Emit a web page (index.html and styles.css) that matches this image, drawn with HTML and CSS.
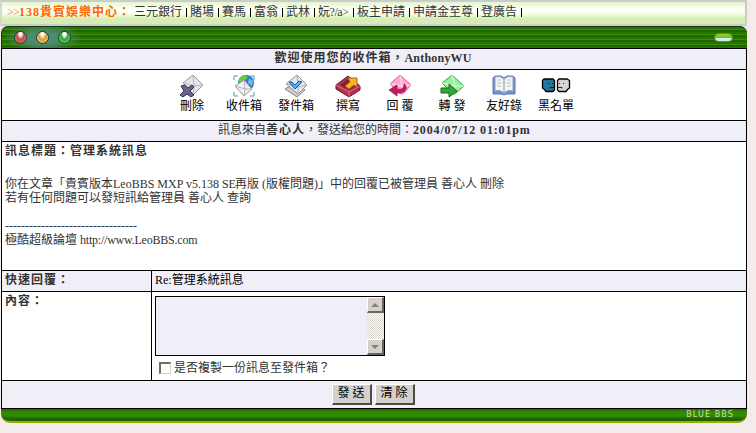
FILE: index.html
```
<!DOCTYPE html>
<html lang="zh-Hant">
<head>
<meta charset="utf-8">
<title>收件箱</title>
<link rel="stylesheet" href="styles.css">
</head>
<body>
<nav class="topnav"><span class="arrows">&gt;&gt;</span><b class="brand"><span class="num">138</span>貴賓娛樂中心：</b><a>三元銀行</a><a>賭場</a><a>賽馬</a><a>富翁</a><a>武林</a><a class="odd">妧?/a&gt;</a><a>板主申請</a><a>申請金至尊</a><a>登廣告</a></nav>
<main class="window">
  <header class="titlebar">
    <div class="lights"><i class="light red"></i><i class="light yellow"></i><i class="light lime"></i></div>
    <i class="pill"></i>
  </header>
  <section class="panel">
    <h1 class="row welcome">歡迎使用您的收件箱，<span class="user">AnthonyWU</span></h1>
    <div class="tools">
      <a class="tool"><svg viewBox="0 0 26 24"><path d="M4 9 14 1 24 11 14 21Z" fill="#e5e5e7" stroke="#96969c"/><path d="M4 9 15 12 14 1M15 12 14 21M15 12 24 11" fill="none" stroke="#b7b7bd"/><path d="M2 12 6 11 9 14 13 11 15 13 11 17 15 21 12 23 8 20 4 23 1 21 5 17Z" fill="#66668f" stroke="#343452"/></svg><span>刪除</span></a>
      <a class="tool"><svg viewBox="0 0 26 24"><circle cx="15" cy="9" r="8" fill="#2878d0"/><path d="M7 7Q9 1 15 1L17 4 14 6 11 10Z" fill="#65cb43"/><path d="M18 4 22 7 21 12 17 9Z" fill="#79b7eb"/><path d="M4 12 13 6 21 15 13 22Z" fill="#f0f0f0" stroke="#9696a0"/><path d="M4 12 14 15 13 6M14 15 13 22M14 15 21 15" fill="none" stroke="#b4b4bc"/><path d="M3 6V2H7M19 2H23V6M3 18V22H7M19 22H23V18" fill="none" stroke="#4c91bd"/></svg><span>收件箱</span></a>
      <a class="tool"><svg viewBox="0 0 26 24"><path d="M2 15 12 9 22 16 14 23Z" fill="#ccccce" stroke="#84848b"/><path d="M3 10 14 1 24 11 15 20Z" fill="#e9e9ec" stroke="#96969c"/><path d="M3 10 15 13 14 1M15 13V20M15 13 24 11" fill="none" stroke="#aaaab0"/><path d="M6 8 9 8 12 11 16 7 19 8 12 15Z" fill="#4ab5ff" stroke="#145aa8"/></svg><span>發件箱</span></a>
      <a class="tool"><svg viewBox="0 0 26 24"><path d="M1 11 13 2 25 12V16L14 23 1 15Z" fill="#b4304f" stroke="#681932"/><path d="M5 11 13 5 21 12 14 16Z" fill="#7d2138"/><path d="M1 11 14 18 25 12M14 18V23" fill="none" stroke="#e06b87"/><path d="M13 4H22V13L19 11 14 15 10 12 15 8Z" fill="#ffb324" stroke="#a96516"/></svg><span>撰寫</span></a>
      <a class="tool"><svg viewBox="0 0 26 24"><path d="M3 10 13 1 24 11 15 21Z" fill="#ffabd2" stroke="#db559b"/><path d="M3 10 15 12 13 1M15 12V21M15 12 24 11" fill="none" stroke="#ffe3ef"/><path d="M17 10C21 12 20 20 10 19V22L2 16 10 11V15C15 16 17 14 17 10Z" fill="#c51c59" stroke="#86123d" stroke-width=".7"/></svg><span>回 覆</span></a>
      <a class="tool"><svg viewBox="0 0 26 24"><path d="M3 9 13 1 25 12 15 21Z" fill="#98ef9c" stroke="#3cad4b"/><path d="M3 9 16 12 13 1M16 12 15 21M16 12 25 12" fill="none" stroke="#e0ffe1"/><path d="M2 14H10V10L18 17 10 23V19H2Z" fill="#32a832" stroke="#176a22"/></svg><span>轉 發</span></a>
      <a class="tool"><svg viewBox="0 0 26 24"><path d="M2 4 4 2H10L13 4 16 2H22L24 4V20H15L13 21 11 20H2Z" fill="#6f8fd4" stroke="#5f79b8"/><path d="M4 3Q9 1 13 5Q17 1 22 3V17Q17 15 13 19Q9 15 4 17Z" fill="#f3f4f6" stroke="#91a0b5"/><path d="M13 5V18" fill="none" stroke="#8390a8"/><path d="M6 6H10M6 9H11M6 12H10M16 6H20M15 9H20M16 12H20" fill="none" stroke="#bcc4d0"/></svg><span>友好錄</span></a>
      <a class="tool"><svg class="wide" viewBox="0 0 30 24"><path d="M3 5H12L13.500 6.500V16L12 17.500H5L3.500 15.500 1.500 14V6.500Z" fill="#23759b" stroke="#000" stroke-width="1.300"/><path d="M18 5H26L28.500 6.500V14L26.500 15.500 25 17.500H18L16.500 16V6.500Z" fill="#d6d6d6" stroke="#000" stroke-width="1.300"/><path d="M7 9.500H8M11 9.500H12M9 14.500V13.500H13M18 9.500H19M22 9.500H23M17 13.500H21V14.500" fill="none" stroke="#000" stroke-width=".8"/></svg><span>黑名單</span></a>
    </div>
    <div class="row from">訊息來自<b>善心人</b>，發送給您的時間：<b class="date">2004/07/12 01:01pm</b></div>
    <article class="message">
      <b>訊息標題：管理系統訊息</b>
      <p>你在文章「貴賓版本<span class="product">LeoBBS MXP v5.138 SE </span>再版 (版權問題)」中的回覆已被管理員 善心人 刪除<br>若有任何問題可以發短訊給管理員 善心人 查詢</p>
      <p><span class="rule">---------------------------------</span><br>極酷超級論壇 <span class="url">http://www.LeoBBS.com</span></p>
    </article>
    <form class="reply">
      <b class="label shade">快速回覆：</b>
      <div class="field shade subject">Re:管理系統訊息</div>
      <b class="label">內容：</b>
      <div class="field">
        <div class="textarea"><div class="scrollbar"><span class="scroll up"></span><span class="scroll down"></span></div></div>
        <label class="copy"><i class="check"></i>是否複製一份訊息至發件箱？</label>
      </div>
      <div class="actions shade"><span class="btn">發 送</span><span class="btn">清 除</span></div>
    </form>
  </section>
  <footer class="bottom">BLUE BBS</footer>
</main>
</body>
</html>
```
FILE: styles.css
```
* { box-sizing: border-box; }
body {
  margin: 0;
  height: 433px;
  overflow: hidden;
  background: #f4ebeb;
  color: #333;
  font: 12px/14px "Liberation Serif", "Noto Sans CJK TC", serif;
  white-space: nowrap;
}
b, h1 { letter-spacing: 1px; font-weight: bold; }

.topnav {
  display: flex;
  align-items: center;
  width: 747px;
  height: 26px;
  padding: 0 0 2px 5px;
  border: 2px solid #ccc;
  border-left-color: #d8d8d0;
  background: linear-gradient(#e2f6cc, #fffff8 35%, #fafff0 50%, #d4edb0 78%, #d6ebba);
}
.arrows { width: 12px; color: #f60; letter-spacing: -.7px; }
.brand { width: 115px; color: #f60; }
.num { display: inline-block; width: 21px; }
.topnav a { display: flex; align-items: center; }
.topnav a::after {
  content: "";
  width: 1px;
  height: 9px;
  margin: 0 3px 0 4px;
  background: #000;
}
.topnav .odd { width: 39px; letter-spacing: -.5px; }
.topnav .odd::after { margin-left: auto; }

.window { width: 746px; padding-left: 1px; }
.titlebar {
  display: flex;
  align-items: center;
  justify-content: space-between;
  height: 22px;
  padding: 0 14px 0 12px;
  border-top: 1px solid #143c08;
  border-left: 1px solid #143c08;
  border-radius: 7px 7px 0 0;
  margin-right: -1px;
  background:
    radial-gradient(ellipse 40px 15px at 41px 11px, #4f8a70 0 40%, rgba(84,144,120,0)),
    repeating-linear-gradient(#277400 0 2px, #379200 2px 3px, #206600 3px 5px);
}
.lights { display: flex; gap: 9px; }
.light {
  width: 13px;
  height: 13px;
  border: 1px solid #203c3c;
  border-radius: 50%;
}
.red { background: radial-gradient(ellipse at 50% 15%, #fff 0 15%, #b94c48 45%, #f08b78); }
.yellow { background: radial-gradient(ellipse at 50% 15%, #fff 0 15%, #d4a23b 45%, #ffe27d); }
.lime { background: radial-gradient(ellipse at 50% 15%, #fff 0 15%, #2fa83b 45%, #74ee75); }
.pill {
  width: 19px;
  height: 9px;
  border: 1px solid #539b12;
  border-radius: 5px;
  background: linear-gradient(#9ccb3a, #79b600 60%, #cceef4 62%);
}

.panel { width: 746px; border: 1px solid #000; background: #fff; }
.row, .shade { background: #f0eff8; }
.row {
  height: 21px;
  margin: 0;
  border-bottom: 1px solid #000;
  text-align: center;
  font-size: 12px;
  line-height: 19px;
}
.user { display: inline-block; width: 69px; text-align: left; letter-spacing: .2px; }
.tools {
  display: flex;
  height: 51px;
  padding: 4px 0 0 164px;
  border-bottom: 1px solid #000;
  color: #000;
}
.tool {
  display: flex;
  flex-direction: column;
  align-items: center;
  width: 52px;
}
.tool svg { width: 26px; height: 24px; }
.tool .wide { width: 30px; }
.tool span { line-height: 17px; }
.date { display: inline-block; width: 117px; text-align: left; letter-spacing: .85px; }

.message {
  height: 129px;
  padding: 2px 3px;
  border-bottom: 1px solid #000;
}
.message b { display: block; height: 15px; }
.message p { margin: 18px 0 0; }
.message p + p { margin-top: 14px; }
.product { display: inline-block; width: 122px; white-space: pre; }
.rule { letter-spacing: 0; }
.url { letter-spacing: -.22px; }

.reply {
  display: grid;
  grid-template-columns: 150px 1fr;
  grid-template-rows: 21px 89px 27px;
}
.label { padding: 2px 3px; border-right: 1px solid #000; border-bottom: 1px solid #000; }
.field { padding: 4px 3px; border-bottom: 1px solid #000; }
.subject { padding-top: 2px; color: #000; }
.textarea {
  display: flex;
  justify-content: flex-end;
  width: 230px;
  height: 60px;
  border: 1px solid #000;
  background: #f0eff8;
}
.scrollbar {
  display: flex;
  flex-direction: column;
  justify-content: space-between;
  width: 17px;
  background: repeating-conic-gradient(#fff 0 25%, #d6d2cc 0 50%) 0 0 / 2px 2px;
}
.scroll {
  display: flex;
  align-items: center;
  justify-content: center;
  height: 16px;
  border: 1px solid #fff;
  border-right: 2px solid #68635e;
  border-bottom: 2px solid #68635e;
  background: #d5d0ca;
}
.scroll::after { content: ""; border: 4px solid transparent; }
.up::after { border-bottom-color: #858078; border-top: 0; }
.down::after { border-top-color: #858078; border-bottom: 0; }
.copy { display: flex; align-items: center; gap: 3px; padding: 5px 0 0 4px; }
.check {
  width: 12px;
  height: 12px;
  border: 2px solid #706b66;
  border-right: 1px solid #d5d0ca;
  border-bottom: 1px solid #d5d0ca;
}
.actions {
  display: flex;
  grid-column: 1 / -1;
  justify-content: center;
  gap: 3px;
  padding: 3px 2px 0 0;
}
.btn {
  width: 40px;
  height: 21px;
  border: 1px solid #fff;
  border-right: 2px solid #4f4b48;
  border-bottom: 2px solid #4f4b48;
  background: #d5d0ca;
  color: #000;
  text-align: center;
  line-height: 16px;
}
.bottom {
  height: 14px;
  margin-right: -1px;
  padding-right: 13px;
  border-bottom: 2px solid #9cac00;
  border-radius: 0 0 9px 9px;
  background: linear-gradient(#277400 0 2px, #328a00 2px 7px, #1d6200 10px);
  color: #c9dfae;
  text-align: right;
  font: 8px/11px "DejaVu Sans", sans-serif;
  letter-spacing: 1.1px;
}
```
